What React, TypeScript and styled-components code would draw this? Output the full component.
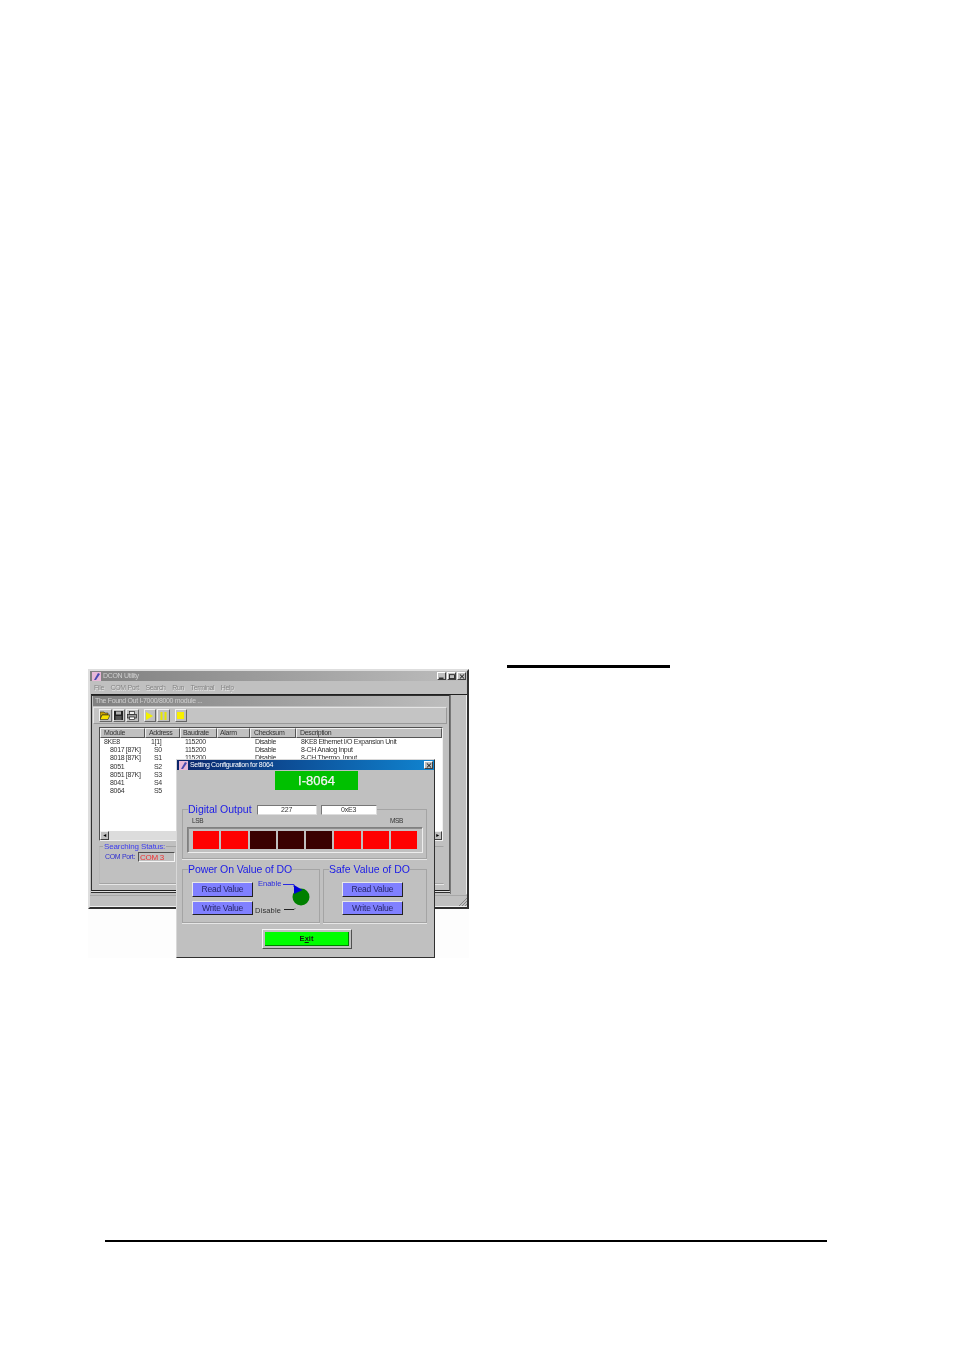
import React from "react";
import styled, { createGlobalStyle } from "styled-components";

const Global = createGlobalStyle`
  html, body { margin: 0; padding: 0; background: #fff; }
  * { box-sizing: border-box; }
  body { font-family: "Liberation Sans", Arial, sans-serif; }
`;

const Page = styled.div`
  width: 954px;
  height: 1351px;
  padding-top: 664px;
  background: #fff;
  overflow: hidden;
`;
const TopRow = styled.div`
  display: flex;
  align-items: flex-start;
  padding-left: 88px;
`;
const Figure = styled.div`
  position: relative;
  width: 381px;
  height: 289px;
  margin-top: 5px;
  background: #fdfdfd;
  filter: blur(0.3px);
`;
const HeadingRule = styled.div`
  width: 163px;
  height: 3px;
  margin: 1px 0 0 38px;
  background: #000;
`;
const FooterRule = styled.div`
  width: 722px;
  height: 2px;
  margin: 282px 0 0 105px;
  background: #000;
`;

const MainWindow = styled.div`
  width: 381px;
  height: 240px;
  display: flex;
  flex-direction: column;
  background: #c0c0c0;
  border: 2px solid;
  border-color: #dedede #303030 #303030 #dedede;
  font-size: 7px;
  letter-spacing: -0.33px;
  line-height: 8px;
  color: #333;
`;
const TitleBar = styled.div<{ $active?: boolean; $h: number }>`
  flex: none;
  height: ${(p) => p.$h}px;
  display: flex;
  align-items: center;
  gap: 2px;
  padding: 0 1px 0 2px;
  background: ${(p) =>
    p.$active
      ? "linear-gradient(90deg, #0a246a, #1084d0)"
      : "linear-gradient(90deg, #808080, #bdbdbd)"};
  color: ${(p) => (p.$active ? "#fff" : "#d0d0d0")};
`;
const TitleText = styled.span`
  flex: 1;
  white-space: nowrap;
`;
const WinControls = styled.div`
  display: flex;
  gap: 1px;
`;
const WinButton = styled.div`
  width: 9px;
  height: 8px;
  display: flex;
  align-items: center;
  justify-content: center;
  background: #c0c0c0;
  border: 1px solid;
  border-color: #fff #404040 #404040 #fff;
  color: #111;
`;
const MenuBar = styled.div`
  flex: none;
  height: 13px;
  display: flex;
  align-items: center;
  gap: 6.5px;
  padding-left: 4px;
  color: #858585;
  text-shadow: 0.5px 0.5px 0 #e6e6e6;
`;
const Client = styled.div`
  flex: 1;
  min-height: 0;
  display: flex;
  border-top: 1px solid #202020;
  margin-left: 1px;
`;
const ChildWindow = styled.div`
  width: 359px;
  height: 196px;
  display: flex;
  flex-direction: column;
  border: 1px solid;
  border-color: #303030 #606060 #202020 #303030;
  padding: 0 1px;
  box-shadow: 0 1px 0 #e0e0e0, 0 2px 0 #303030;
`;
const Gutter = styled.div`
  flex: 1;
  height: 199px;
  border-left: 1px solid #777;
  border-right: 1px solid #eee;
`;
const StatusBar = styled.div`
  flex: none;
  height: 12px;
  border-top: 1px solid #a8a8a8;
  border-bottom: 1px solid #eee;
  display: flex;
  justify-content: flex-end;
  align-items: flex-end;
`;
const Toolbar = styled.div`
  flex: none;
  height: 17px;
  margin-top: 1px;
  margin-right: 1px;
  display: flex;
  align-items: center;
  padding-left: 5px;
  gap: 1px;
  background: #c4c4c4;
  border: 1px solid;
  border-color: #e4e4e4 #999 #999 #e4e4e4;
`;
const ToolButton = styled.div<{ $gap?: number }>`
  width: 12.5px;
  height: 13px;
  margin-left: ${(p) => p.$gap ?? 0}px;
  display: flex;
  align-items: center;
  justify-content: center;
  background: #c0c0c0;
  border: 1px solid;
  border-color: #f0f0f0 #666 #666 #f0f0f0;
`;
const ListBox = styled.div`
  flex: none;
  width: 344px;
  height: 114px;
  margin: 3px 0 0 6px;
  display: flex;
  flex-direction: column;
  background: #fff;
  border: 1px solid;
  border-color: #505050 #f0f0f0 #f0f0f0 #505050;
`;
const HeaderRow = styled.div`
  flex: none;
  height: 10px;
  display: grid;
  grid-template-columns: 45px 35px 37px 33px 46px 1fr;
`;
const HeaderCell = styled.div<{ $pad: number }>`
  padding-left: ${(p) => p.$pad}px;
  background: #c0c0c0;
  border: 1px solid;
  border-color: #f0f0f0 #555 #555 #f0f0f0;
  line-height: 8px;
  white-space: nowrap;
  overflow: hidden;
`;
const Row = styled.div`
  flex: none;
  height: 8.2px;
  display: grid;
  grid-template-columns: 45px 35px 37px 33px 46px 1fr;
  line-height: 8.2px;
  white-space: nowrap;
`;
const Cell = styled.div<{ $pad: number }>`
  padding-left: ${(p) => p.$pad}px;
`;
const ScrollBar = styled.div`
  flex: none;
  margin-top: auto;
  height: 9px;
  display: flex;
  justify-content: space-between;
  background: #dcdcdc;
`;
const ScrollArrow = styled.div`
  width: 9px;
  height: 9px;
  background: #c0c0c0;
  border: 1px solid;
  border-color: #f0f0f0 #404040 #404040 #f0f0f0;
  font-size: 5px;
  line-height: 7px;
  text-align: center;
  color: #000;
`;
const Group = styled.fieldset`
  margin: 0;
  padding: 0;
  min-width: 0;
  border: 1px solid #a4a4a4;
  box-shadow: 0 1px 0 #e6e6e6;
`;
const StatusGroup = styled(Group)`
  width: 345px;
  height: 42px;
  margin: 1px 0 0 6px;
  border-left-color: #b8b8b8;
  border-right-color: #c0c0c0;
`;
const StatusLegend = styled.legend`
  margin-left: 3px;
  padding: 0 1px;
  font-size: 8px;
  letter-spacing: -0.12px;
  line-height: 9px;
  color: #3a3af0;
`;
const StatusLine = styled.div`
  display: flex;
  align-items: center;
  gap: 3px;
  padding: 1px 0 0 5px;
  color: #3030d0;
`;
const ComField = styled.div`
  width: 37px;
  height: 10px;
  padding-left: 1px;
  font-size: 8px;
  line-height: 9px;
  color: #f03030;
  border: 1px solid;
  border-color: #505050 #f4f4f4 #f4f4f4 #505050;
`;

const Dialog = styled.div`
  position: absolute;
  left: 88px;
  top: 90px;
  width: 259px;
  height: 199px;
  display: flex;
  flex-direction: column;
  background: #c0c0c0;
  border: 1px solid;
  border-color: #d8d8d8 #303030 #303030 #d8d8d8;
  font-size: 7px;
  letter-spacing: -0.33px;
  line-height: 8px;
  color: #333;
`;
const Banner = styled.div`
  flex: none;
  width: 83px;
  height: 19px;
  margin: 1px 0 0 98px;
  background: #00c000;
  color: #f4f4f4;
  font-size: 13px;
  letter-spacing: 0;
  -webkit-text-stroke: 0.25px #f4f4f4;
  line-height: 19px;
  text-align: center;
`;
const DigitalGroup = styled(Group)`
  flex: none;
  width: 245px;
  height: 55px;
  margin: 14px 0 0 5px;
`;
const DoLegend = styled.legend<{ $track?: number }>`
  display: flex;
  align-items: center;
  margin-left: 5px;
  padding: 0;
  height: 11px;
  font-size: 10.5px;
  letter-spacing: ${(p) => p.$track ?? 0}px;
  line-height: 11px;
  color: #1a1ae6;
  white-space: nowrap;
`;
const ValueBox = styled.div<{ $w: number; $gap: number }>`
  width: ${(p) => p.$w}px;
  height: 10px;
  margin-left: ${(p) => p.$gap}px;
  background: #fff;
  border: 1px solid #777;
  border-right-color: #ddd;
  border-bottom-color: #ddd;
  font-size: 7px;
  letter-spacing: -0.2px;
  line-height: 8px;
  color: #333;
  text-align: center;
`;
const EndsRow = styled.div`
  display: flex;
  justify-content: space-between;
  height: 10px;
  padding: 2px 23px 0 9px;
  font-size: 6.5px;
  line-height: 8px;
`;
const LedPanel = styled.div`
  display: flex;
  gap: 2px;
  width: 236px;
  height: 26px;
  margin: 2px 0 0 4px;
  padding: 3px 5px;
  border: 1px solid;
  border-color: #808080 #ededed #ededed #808080;
  box-shadow: inset 1px 1px 0 #8c8c8c;
`;
const Led = styled.div<{ $on: boolean }>`
  flex: 1;
  background: ${(p) => (p.$on ? "#ff0000" : "#3a0000")};
`;
const ValueRow = styled.div`
  flex: none;
  display: flex;
  gap: 3px;
  margin: 5px 0 0 5px;
`;
const ValueGroup = styled(Group)<{ $w: number }>`
  width: ${(p) => p.$w}px;
  height: 59px;
`;
const ButtonColumn = styled.div<{ $left: number }>`
  display: flex;
  flex-direction: column;
  gap: 4px;
  flex: none;
  width: ${(p) => p.$left + 61}px;
  padding: 7px 0 0 ${(p) => p.$left}px;
`;
const ActionButton = styled.div`
  height: 14.5px;
  background: #8080ff;
  border: 1px solid;
  border-color: #e8e8e8 #202020 #202020 #e8e8e8;
  font-size: 8.5px;
  letter-spacing: -0.2px;
  line-height: 12px;
  text-align: center;
  color: #26266a;
`;
const PowerBody = styled.div`
  display: flex;
`;
const Switch = styled.div`
  position: relative;
  width: 64px;
  height: 42px;
  margin: 2px 0 0 2px;
  display: flex;
  flex-direction: column;
  justify-content: space-between;
  font-size: 7.5px;
  letter-spacing: 0;
`;
const EnableText = styled.span`
  padding: 3px 0 0 3px;
  color: #2a2ae0;
`;
const DisableText = styled.span`
  padding: 0 0 4px 0;
  color: #303030;
  letter-spacing: 0.15px;
`;
const SwitchArt = styled.svg`
  position: absolute;
  left: 0;
  top: 0;
`;
const ExitOuter = styled.div`
  flex: none;
  width: 90px;
  height: 20px;
  margin: 6px 0 0 85px;
  padding: 2px;
  background: #c0c0c0;
  border: 1px solid;
  border-color: #f4f4f4 #505050 #505050 #f4f4f4;
`;
const ExitInner = styled.div`
  height: 100%;
  background: #00ff00;
  border-bottom: 1px solid #008000;
  border-right: 1px solid #008000;
  font-size: 7.5px;
  letter-spacing: 0;
  font-weight: 700;
  line-height: 13px;
  text-align: center;
  color: #102010;
`;
const Underlined = styled.span`
  text-decoration: underline;
`;

const AppIcon = () => (
  <svg width="9" height="9" viewBox="0 0 9 9">
    <rect width="9" height="9" fill="#e8b8d8" />
    <path d="M2 8 L6 1 L8 2 L4 8 Z" fill="#4a4ab0" />
  </svg>
);
const MinIcon = () => (
  <svg width="6" height="5" viewBox="0 0 6 5"><rect x="0" y="3.6" width="4.5" height="1.2" fill="#111" /></svg>
);
const MaxIcon = () => (
  <svg width="6" height="5" viewBox="0 0 6 5">
    <rect x=".5" y=".7" width="5" height="3.9" fill="none" stroke="#111" strokeWidth=".8" />
  </svg>
);
const CloseIcon = () => (
  <svg width="6" height="5" viewBox="0 0 6 5">
    <path d="M.8.4L5.2 4.6M5.2.4L.8 4.6" stroke="#111" strokeWidth="1" />
  </svg>
);
const FolderIcon = () => (
  <svg width="10" height="9" viewBox="0 0 10 9">
    <path d="M0 1h4l1 1h3v2H2L0 8z" fill="#c8a000" stroke="#222" strokeWidth=".6" />
    <path d="M0 8.5L2 4h8L8 8.5z" fill="#f8e000" stroke="#222" strokeWidth=".6" />
  </svg>
);
const SaveIcon = () => (
  <svg width="9" height="9" viewBox="0 0 9 9">
    <rect width="9" height="9" fill="#222" />
    <rect x="2" y="0.5" width="5" height="3" fill="#b0b0b0" />
    <rect x="1.5" y="5" width="6" height="4" fill="#555" />
  </svg>
);
const PrintIcon = () => (
  <svg width="10" height="9" viewBox="0 0 10 9">
    <rect x="2.5" y="0.5" width="5" height="3" fill="#eee" stroke="#222" strokeWidth=".7" />
    <rect x="0.5" y="3.5" width="9" height="3.5" fill="#999" stroke="#222" strokeWidth=".7" />
    <rect x="2.5" y="6" width="5" height="2.5" fill="#fff" stroke="#222" strokeWidth=".7" />
  </svg>
);
const PlayIcon = () => (
  <svg width="7" height="8" viewBox="0 0 7 8"><path d="M0 0l7 4-7 4z" fill="#f0f000" /></svg>
);
const PauseIcon = () => (
  <svg width="7" height="8" viewBox="0 0 7 8">
    <rect x="0.5" width="2" height="8" fill="#e8e800" />
    <rect x="4.5" width="2" height="8" fill="#e8e800" />
  </svg>
);
const StopIcon = () => (
  <svg width="7" height="7" viewBox="0 0 7 7"><rect width="7" height="7" fill="#f8f000" /></svg>
);
const Grip = () => (
  <svg width="9" height="9" viewBox="0 0 9 9">
    <path d="M1 9L9 1M4 9L9 4M7 9L9 7" stroke="#777" strokeWidth=".8" />
  </svg>
);

const columns = [
  ["Module", 3],
  ["Address", 3],
  ["Baudrate", 2],
  ["Alarm", 2],
  ["Checksum", 3],
  ["Description", 3],
] as const;

const rows = [
  { m: "8KE8", i: 3, a: "1[1]", ai: 6, b: "115200", c: "Disable", d: "8KE8 Ethernet I/O Expansion Unit" },
  { m: "8017 [87K]", i: 9, a: "S0", ai: 9, b: "115200", c: "Disable", d: "8-CH Analog Input" },
  { m: "8018 [87K]", i: 9, a: "S1", ai: 9, b: "115200", c: "Disable", d: "8-CH Thermo. Input" },
  { m: "8051", i: 9, a: "S2", ai: 9 },
  { m: "8051 [87K]", i: 9, a: "S3", ai: 9 },
  { m: "8041", i: 9, a: "S4", ai: 9 },
  { m: "8064", i: 9, a: "S5", ai: 9 },
];

const leds = [true, true, false, false, false, true, true, true];

export default function App() {
  return (
    <Page>
      <Global />
      <TopRow>
        <Figure>
          <MainWindow>
            <TitleBar $h={10}>
              <AppIcon />
              <TitleText>DCON Utility</TitleText>
              <WinControls>
                <WinButton><MinIcon /></WinButton>
                <WinButton><MaxIcon /></WinButton>
                <WinButton><CloseIcon /></WinButton>
              </WinControls>
            </TitleBar>
            <MenuBar>
              <span>File</span>
              <span>COM Port</span>
              <span>Search</span>
              <span>Run</span>
              <span>Terminal</span>
              <span>Help</span>
            </MenuBar>
            <Client>
              <ChildWindow>
                <TitleBar $h={10}>
                  <TitleText>The Found Out I-7000/8000 module ...</TitleText>
                </TitleBar>
                <Toolbar>
                  <ToolButton><FolderIcon /></ToolButton>
                  <ToolButton><SaveIcon /></ToolButton>
                  <ToolButton><PrintIcon /></ToolButton>
                  <ToolButton $gap={4}><PlayIcon /></ToolButton>
                  <ToolButton><PauseIcon /></ToolButton>
                  <ToolButton $gap={4}><StopIcon /></ToolButton>
                </Toolbar>
                <ListBox>
                  <HeaderRow>
                    {columns.map(([label, pad]) => (
                      <HeaderCell key={label} $pad={pad}>{label}</HeaderCell>
                    ))}
                  </HeaderRow>
                  {rows.map((r) => (
                    <Row key={r.m}>
                      <Cell $pad={r.i + 1}>{r.m}</Cell>
                      <Cell $pad={r.ai}>{r.a}</Cell>
                      <Cell $pad={5}>{r.b}</Cell>
                      <Cell $pad={3} />
                      <Cell $pad={5}>{r.c}</Cell>
                      <Cell $pad={5}>{r.d}</Cell>
                    </Row>
                  ))}
                  <ScrollBar>
                    <ScrollArrow>◄</ScrollArrow>
                    <ScrollArrow>►</ScrollArrow>
                  </ScrollBar>
                </ListBox>
                <StatusGroup>
                  <StatusLegend>Searching Status:</StatusLegend>
                  <StatusLine>
                    <span>COM Port:</span>
                    <ComField>COM 3</ComField>
                  </StatusLine>
                </StatusGroup>
              </ChildWindow>
              <Gutter />
            </Client>
            <StatusBar><Grip /></StatusBar>
          </MainWindow>

          <Dialog>
            <TitleBar $active $h={10}>
              <AppIcon />
              <TitleText>Setting Configuration for 8064</TitleText>
              <WinButton><CloseIcon /></WinButton>
            </TitleBar>
            <Banner>I-8064</Banner>
            <DigitalGroup>
              <DoLegend>
                Digital Output
                <ValueBox $w={60} $gap={5}>227</ValueBox>
                <ValueBox $w={56} $gap={4}>0xE3</ValueBox>
              </DoLegend>
              <EndsRow>
                <span>LSB</span>
                <span>MSB</span>
              </EndsRow>
              <LedPanel>
                {leds.map((on, i) => (
                  <Led key={i} $on={on} />
                ))}
              </LedPanel>
            </DigitalGroup>
            <ValueRow>
              <ValueGroup $w={138}>
                <DoLegend $track={-0.1}>Power On Value of DO</DoLegend>
                <PowerBody>
                  <ButtonColumn $left={9}>
                    <ActionButton>Read Value</ActionButton>
                    <ActionButton>Write Value</ActionButton>
                  </ButtonColumn>
                  <Switch>
                    <EnableText>Enable</EnableText>
                    <DisableText>Disable</DisableText>
                    <SwitchArt width="64" height="42" viewBox="0 0 64 42">
                      <path d="M28 7.5H39V10" stroke="#2a2ae0" strokeWidth="1" fill="none" />
                      <path d="M29 32.5H39l1-1" stroke="#222" strokeWidth="1" fill="none" />
                      <circle cx="46" cy="20" r="8.5" fill="#008000" />
                      <path d="M39 8L47.5 13 39 17z" fill="#0000d8" />
                    </SwitchArt>
                  </Switch>
                </PowerBody>
              </ValueGroup>
              <ValueGroup $w={104}>
                <DoLegend>Safe Value of DO</DoLegend>
                <ButtonColumn $left={18}>
                  <ActionButton>Read Value</ActionButton>
                  <ActionButton>Write Value</ActionButton>
                </ButtonColumn>
              </ValueGroup>
            </ValueRow>
            <ExitOuter>
              <ExitInner>E<Underlined>x</Underlined>it</ExitInner>
            </ExitOuter>
          </Dialog>
        </Figure>
        <HeadingRule />
      </TopRow>
      <FooterRule />
    </Page>
  );
}
